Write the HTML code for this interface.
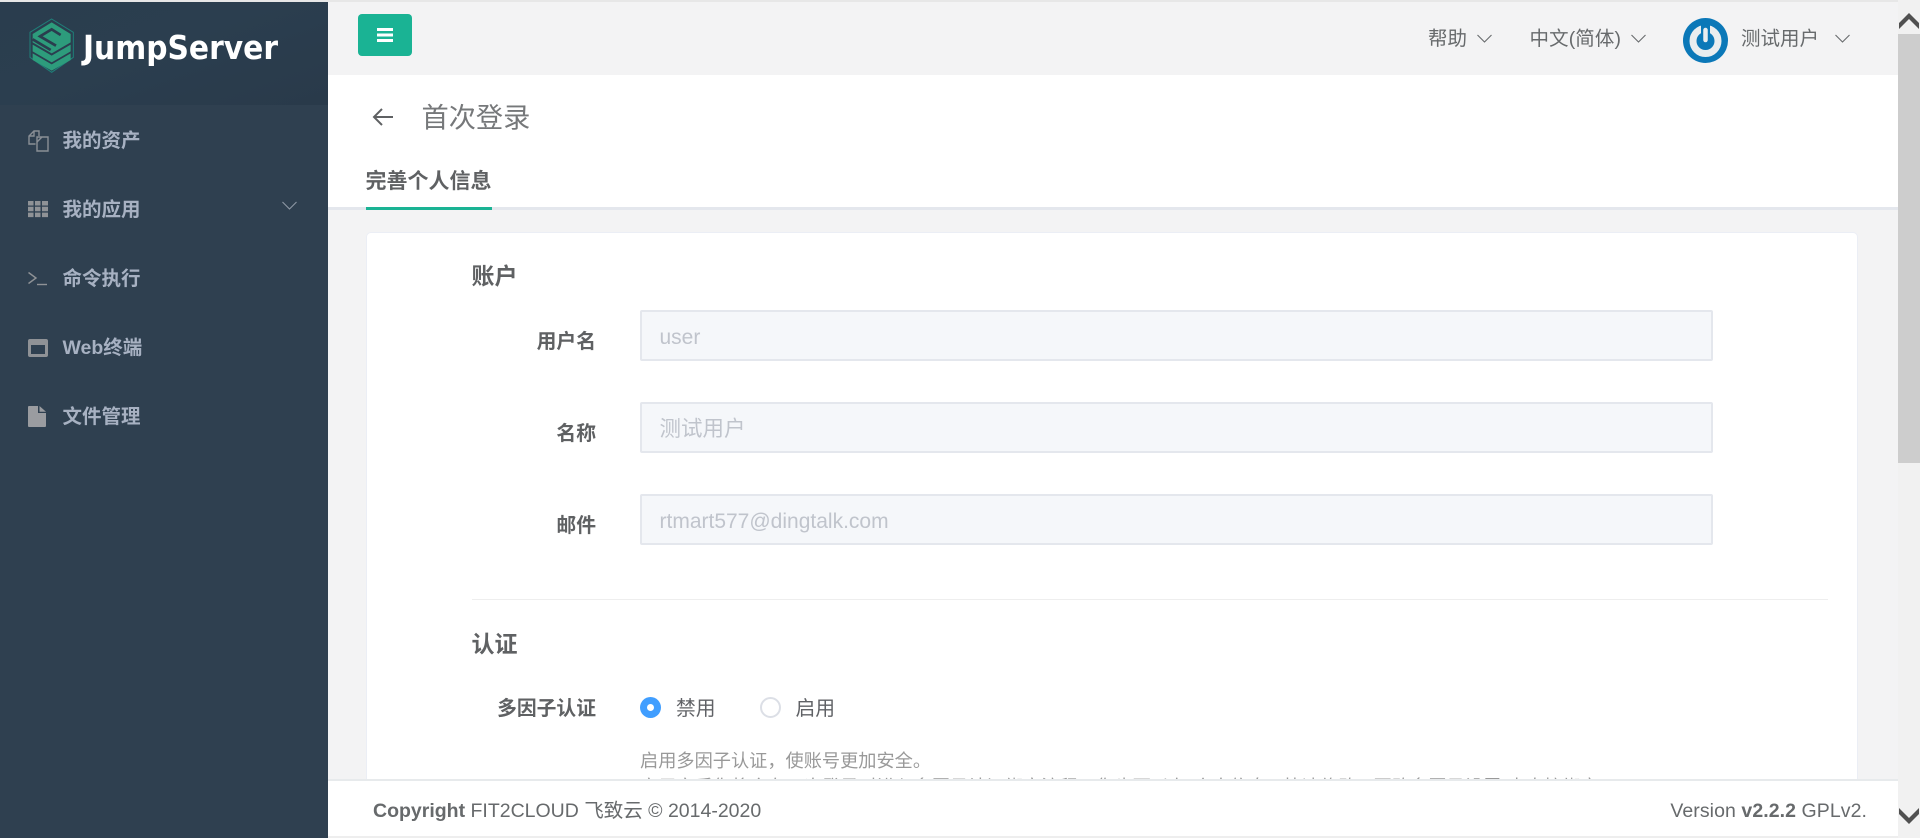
<!DOCTYPE html>
<html lang="zh-CN"><head><meta charset="utf-8"><title>首次登录</title>
<style>
html,body{margin:0;padding:0;width:1920px;height:838px;overflow:hidden;background:#f3f3f4}
body{position:relative;font-family:"Liberation Sans","Noto Sans CJK SC",sans-serif;color:#676a6c}
.a{position:absolute;white-space:nowrap}
.t{position:absolute;white-space:nowrap;height:30px;line-height:30px;font-size:19.5px}
.nav{left:62.5px;font-weight:700;color:#a7b1c2}
.lab{font-weight:700;text-align:right;left:440px;width:156px;color:#5f6163;font-size:19.8px}
.sec{left:471.5px;font-size:23px;font-weight:700;color:#5f6163}
.inp{position:absolute;left:640px;width:1069px;height:47px;border:2px solid #e4e7ed;background:#f5f7fa;border-radius:2px}
.ph{left:659.5px;font-size:21px;color:#c0c4cc}
svg{position:absolute;overflow:visible}
</style></head><body>
<div class="a" style="left:0;top:0;width:1920px;height:2px;background:#e7e7e7"></div>
<div class="a" style="left:0;top:2px;width:328px;height:836px;background:#2f4050"></div>
<div class="a" style="left:0;top:2px;width:328px;height:103px;background:linear-gradient(160deg,#2a3d4e 0%,#2b3e4f 45%,#293a4a 100%)"></div>
<svg style="left:20px;top:14px" width="64" height="64" viewBox="0 0 192 192">
<path d="M95 15 160 55V130L95 175 30 130V55Z" fill="none" stroke="#1f7f78" stroke-width="3"/>
<path d="M38 60 95 25 152 60V85L95 118 38 85Z" fill="#2d9c7c"/>
<path d="M38 92 95 125 152 92V112L95 145 38 112Z" fill="#2d9c7c"/>
<path d="M38 118 95 151 152 118V138L95 170 38 138Z" fill="#2d9c7c"/>
<path d="M122 63 95 46 60 67 108 95M38 76 92 108" fill="none" stroke="#2a3d4e" stroke-width="8"/>
</svg>
<svg style="left:83px;top:24px" width="200" height="50"><text x="0" y="35" font-family="'DejaVu Sans Condensed','DejaVu Sans','Liberation Sans',sans-serif" font-weight="700" font-size="33" fill="#fff" textLength="195" lengthAdjust="spacingAndGlyphs">JumpServer</text></svg>

<svg style="left:28px;top:130px" width="21" height="22" fill="none" stroke="#8a8f96" stroke-width="1.4"><path d="M7.500 14H1V6L6 1H11V6"/><path d="M6 1V6H1"/><path d="M9 7H20V21H9Z"/><path d="M9 12 14 7"/></svg>
<div class="t nav" style="top:125.500px">我的资产</div>
<svg style="left:28px;top:201px" width="20" height="16" fill="#8f9296"><path d="M0 0h5.500v4.500H0zM7 0h5.500v4.500H7zM14 0h6v4.500h-6zM0 5.800h5.500v4.500H0zM7 5.800h5.500v4.500H7zM14 5.800h6v4.500h-6zM0 11.600h5.500v4.500H0zM7 11.600h5.500v4.500H7zM14 11.600h6v4.500h-6z"/></svg>
<div class="t nav" style="top:194.500px">我的应用</div>
<svg style="left:282px;top:201px" width="15" height="9" fill="none" stroke="#8f99a6" stroke-width="1.100"><path d="M.5 1 7.500 8 14.500 1"/></svg>
<svg style="left:28px;top:271px" width="20" height="15" fill="none" stroke="#8f9296" stroke-width="1.400"><path d="M0.500 1.500 8 7 .5 12.500"/><path d="M9 13.500H19"/></svg>
<div class="t nav" style="top:263.500px">命令执行</div>
<svg style="left:28px;top:339px" width="20" height="18"><path fill="#8f9296" fill-rule="evenodd" d="M2 0H18A2 2 0 0 1 20 2V16A2 2 0 0 1 18 18H2A2 2 0 0 1 0 16V2A2 2 0 0 1 2 0ZM3 6V15H17V6Z"/></svg>
<div class="t nav" style="top:332.500px">Web终端</div>
<svg style="left:28px;top:406px" width="18" height="21"><path fill="#9a9ca0" d="M0 1A1 1 0 0 1 1 0H10V7H18V20A1 1 0 0 1 17 21H1A1 1 0 0 1 0 20ZM11.500 0 18 5.800H11.500Z"/></svg>
<div class="t nav" style="top:402px">文件管理</div>

<div class="a" style="left:328px;top:2px;width:1570px;height:73px;background:#f3f3f4"></div>
<div class="a" style="left:358px;top:14px;width:54px;height:42px;background:#1ab394;border-radius:4px"></div>
<svg style="left:377px;top:28px" width="16" height="14" fill="#fff"><path d="M0 0H16V3H0ZM0 5.500H16V8.500H0ZM0 11H16V14H0Z"/></svg>
<div class="t" style="left:1428px;top:24px">帮助</div>
<svg style="left:1477px;top:34px" width="15" height="9" fill="none" stroke="#676a6c" stroke-width="1.100"><path d="M.5 1 7.500 8 14.500 1"/></svg>
<div class="t" style="left:1529.500px;top:24px;letter-spacing:.1px">中文(简体)</div>
<svg style="left:1631px;top:34px" width="15" height="9" fill="none" stroke="#676a6c" stroke-width="1.100"><path d="M.5 1 7.500 8 14.500 1"/></svg>
<svg style="left:1683px;top:18px" width="45" height="45"><circle cx="22.500" cy="22.500" r="22.500" fill="#0b78b8"/><circle cx="22.500" cy="23" r="12.500" fill="none" stroke="#e9edef" stroke-width="7"/><path d="M22.500 7V22" stroke="#0b78b8" stroke-width="9"/><path d="M22.500 12V22" stroke="#e9edef" stroke-width="4.500" stroke-linecap="round"/></svg>
<div class="t" style="left:1741px;top:24px;font-size:19.500px">测试用户</div>
<svg style="left:1835px;top:34px" width="15" height="9" fill="none" stroke="#676a6c" stroke-width="1.100"><path d="M.5 1 7.500 8 14.500 1"/></svg>

<div class="a" style="left:328px;top:75px;width:1570px;height:132px;background:#fff"></div>
<div class="a" style="left:328px;top:207px;width:1570px;height:3px;background:#e4e7ed"></div>
<div class="a" style="left:366px;top:207px;width:126px;height:3px;background:#1ab394"></div>
<svg style="left:372px;top:107px" width="22" height="20" fill="none" stroke="#5f6163" stroke-width="2"><path d="M21 10H2M10 2 2 10 10 18"/></svg>
<div class="t" style="left:421.5px;top:103px;font-size:27.200px;color:#76787a">首次登录</div>
<div class="t" style="left:365.5px;top:166.500px;font-size:21px;font-weight:700;color:#5f6163">完善个人信息</div>

<div class="a" style="left:366px;top:232px;width:1490px;height:620px;background:#fff;border:1px solid #ebeef5;border-radius:5px;box-sizing:content-box"></div>
<div class="t sec" style="top:261px">账户</div>
<div class="t lab" style="top:326.500px">用户名</div>
<div class="inp" style="top:310px"></div><div class="t ph" style="top:322.500px">user</div>
<div class="t lab" style="top:418.500px">名称</div>
<div class="inp" style="top:402px"></div><div class="t ph" style="top:414px;font-size:21.500px">测试用户</div>
<div class="t lab" style="top:510.500px">邮件</div>
<div class="inp" style="top:494px"></div><div class="t ph" style="top:506.500px">rtmart577@dingtalk.com</div>
<div class="a" style="left:472px;top:599px;width:1356px;height:0;border-top:1px solid #eeeeee"></div>
<div class="t sec" style="top:629px">认证</div>
<div class="t lab" style="top:694px">多因子认证</div>
<div class="a" style="left:640px;top:697px;width:21px;height:21px;border-radius:50%;background:#409eff"></div>
<div class="a" style="left:647px;top:704px;width:7px;height:7px;border-radius:50%;background:#fff"></div>
<div class="t" style="left:676px;top:694px;color:#606266;font-size:19.800px">禁用</div>
<div class="a" style="left:760px;top:697px;width:17px;height:17px;border-radius:50%;background:#fff;border:2px solid #dcdfe6"></div>
<div class="t" style="left:795.500px;top:694px;color:#606266;font-size:19.800px">启用</div>
<div class="t" style="left:640px;top:745.500px;font-size:18.200px;color:#999">启用多因子认证，使账号更加安全。</div>
<div class="t" style="left:640px;top:771.500px;font-size:18px;letter-spacing:.25px;color:#999">启用之后您将会在下次登录时进入多因子认证绑定流程；您也可以在(个人信息-&gt;快速修改-&gt;更改多因子设置)中直接绑定！</div>

<div class="a" style="left:328px;top:779px;width:1570px;height:57px;background:#fff;border-top:2px solid #e7eaec;box-sizing:border-box"></div>
<div class="a" style="left:328px;top:836px;width:1570px;height:2px;background:#eee"></div>
<div class="t" style="left:373px;top:795.500px"><b>Copyright</b> FIT2CLOUD 飞致云 © 2014-2020</div>
<div class="t" style="left:1660px;top:795.500px;width:207px;text-align:right"><span style="letter-spacing:.07px">Version <b>v2.2.2</b> GPLv2.</span></div>

<div class="a" style="left:1898px;top:0;width:22px;height:838px;background:#f1f1f1"></div>
<div class="a" style="left:1898px;top:34px;width:22px;height:429px;background:#cdcdcd"></div>
<svg style="left:1899px;top:13px" width="20" height="16"><path fill="#505050" d="M0 10 10 0 20 10V16L10 6 0 16Z"/></svg>
<svg style="left:1899px;top:808px" width="20" height="16"><path fill="#505050" d="M0 6 10 16 20 6V0L10 10 0 0Z"/></svg>
</body></html>
